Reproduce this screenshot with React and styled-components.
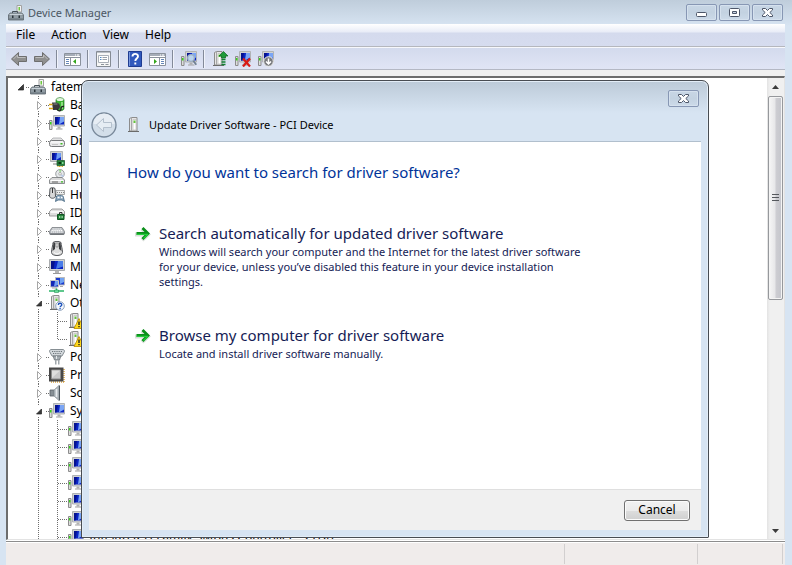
import React from "react";
import styled, { createGlobalStyle } from "styled-components";

const Global = createGlobalStyle`
  * { box-sizing: border-box; }
  html, body { margin: 0; }
  body { font: 12px/18px "Noto Sans", "Open Sans", sans-serif; color: #000; overflow: hidden; }
  button, a { font: inherit; color: inherit; }
  svg { flex: none; display: block; }
`;

const Window = styled.main`
  position: relative;
  display: flex;
  flex-direction: column;
  height: 100vh;
  padding: 0 7px 0 6px;
  background: linear-gradient(#bfcddb 0, #d7e4f2 26px);
`;
const TitleBar = styled.header`
  display: flex;
  flex: none;
  height: 24px;
  padding-right: 2px;
  color: #4c5763;
`;
const TitleText = styled.h1`
  flex: 1;
  display: flex;
  align-items: center;
  gap: 4px;
  margin: 0;
  padding: 2px 0 0 2px;
  font-size: 11px;
  font-weight: 400;
`;
const Captions = styled.div`
  display: flex;
  gap: 2px;
  margin-top: 4px;
`;
const CaptionButton = styled.button`
  display: grid;
  place-items: center;
  width: 31px;
  height: 17px;
  padding: 0;
  border: 1px solid #8797b4;
  border-radius: 2px;
  background: linear-gradient(#c8d6e5, #c3d2e1 50%, #ccdae9);
  box-shadow: inset 0 0 0 1px #d5e1ee;
`;
const MenuBar = styled.nav`
  display: flex;
  flex: none;
  height: 23px;
  padding-left: 2px;
  border-bottom: 1px solid #b5b7bd;
  background: linear-gradient(#fff 0, #e8ecf7 8px, #d4daed 9px, #d6dcef);
`;
const MenuItem = styled.button`
  padding: 0 8px;
  border: 0;
  background: none;
`;
const ToolBar = styled.div`
  display: flex;
  flex: none;
  align-items: center;
  height: 23px;
  padding: 0 0 0 1px;
  border-top: 1px solid #f7f8fc;
  border-bottom: 1px solid #b4b8c4;
  background: linear-gradient(#d3daed, #e0e5f5);
`;
const Tool = styled.button`
  display: grid;
  place-items: center;
  width: 23px;
  height: 20px;
  padding: 0;
  border: 0;
  background: none;
`;
const Divider = styled.span`
  width: 2px;
  height: 18px;
  margin: 0 3px;
  border-left: 1px solid #838a99;
  border-right: 1px solid #f0f3fb;
`;
const Body = styled.section`
  display: flex;
  flex: 1;
  flex-direction: column;
  min-height: 0;
  padding-top: 6px;
  background: #f0f0f0;
`;
const Client = styled.div`
  display: flex;
  flex: 1;
  min-height: 0;
  border: solid #6d6d6d;
  border-width: 2px 0 0 2px;
  border-right: 1px solid #e3e3e3;
  border-bottom: 1px solid #e3e3e3;
  background: #fff;
`;
const Tree = styled.ul`
  flex: 1;
  margin: 0;
  padding: 0;
  overflow: hidden;
  list-style: none;
`;
const Row = styled.li`
  display: flex;
  align-items: center;
  height: 18px;
  white-space: nowrap;
`;
const Label = styled.span`
  padding-left: 5px;
`;
const ScrollBar = styled.div`
  display: flex;
  flex: none;
  flex-direction: column;
  align-items: center;
  width: 17px;
  background: linear-gradient(90deg, #e3e3e3, #f0f0f0 3px, #f0f0f0);
`;
const ScrollArrow = styled.button`
  display: grid;
  place-items: center;
  width: 17px;
  height: 17px;
  padding: 0;
  border: 0;
  background: none;
`;
const Track = styled.div`
  flex: 1;
  width: 15px;
  padding-top: 1px;
`;
const Thumb = styled.div`
  display: grid;
  place-items: center;
  height: 48%;
  border: 1px solid #96989c;
  border-radius: 2px;
  background: linear-gradient(90deg, #f6f6f6, #e7e7e9 45%, #cdcdd2 55%, #c4c5cb);
  box-shadow: inset 0 0 0 1px #f4f4f4;
`;
const StatusBar = styled.footer`
  display: flex;
  flex: none;
  height: 24px;
  border-top: 1px solid #8d8d8d;
  padding: 2px 2px 1px 0;
  background: #f0eceb;
  box-shadow: inset 0 1px 0 #fff, 0 -1px 0 #fff;
  margin-top: 1px;
`;
const StatusPane = styled.div`
  flex: ${(p) => (p.$w ? `0 0 ${p.$w}px` : 1)};
  border-right: 1px solid #d2cfcf;
`;

const Dialog = styled.section`
  position: absolute;
  inset: 80px 83px 27px 81px;
  display: flex;
  flex-direction: column;
  padding: 0 7px 7px;
  border: 1px solid #484c52;
  border-radius: 7px 7px 1px 1px;
  background: linear-gradient(#bccad8 0, #d7e4f2 32px);
  box-shadow: inset 0 0 0 1px #e3edf7;
`;
const DialogTop = styled.div`
  display: flex;
  flex: none;
  justify-content: flex-end;
  height: 27px;
  padding: 9px 2px 0 0;
`;
const DialogTitle = styled.header`
  display: flex;
  flex: none;
  align-items: center;
  gap: 9px;
  height: 34px;
  padding-left: 1px;
  border-bottom: 1px solid #b1bfcd;
`;
const BackButton = styled.button`
  display: grid;
  place-items: center;
  width: 28px;
  height: 28px;
  padding: 0;
  border: 0;
  background: none;
`;
const DialogName = styled.h2`
  margin: 0;
  font-size: 11px;
  line-height: 18px;
  font-weight: 400;
`;
const Content = styled.div`
  flex: 1;
  padding: 19px 90px 0 38px;
  background: #fff;
`;
const Question = styled.h3`
  margin: 0 0 39px;
  font-size: 15px;
  line-height: 22px;
  font-weight: 400;
  color: #003399;
`;
const Command = styled.button`
  display: flex;
  align-items: flex-start;
  gap: 8px;
  width: 100%;
  margin-bottom: 35px;
  padding: 0 0 0 8px;
  border: 0;
  background: none;
  text-align: left;
  color: #151c55;
`;
const CommandText = styled.span`
  display: flex;
  flex-direction: column;
  max-width: 430px;
`;
const CommandTitle = styled.span`
  font-size: 15px;
  line-height: 22px;
`;
const CommandNote = styled.span`
  font-size: 11px;
  line-height: 15px;
`;
const DialogFooter = styled.footer`
  display: flex;
  flex: none;
  align-items: center;
  justify-content: flex-end;
  height: 41px;
  padding-right: 11px;
  border-top: 1px solid #dfdfdf;
  background: #f0f0f0;
`;
const PushButton = styled.button`
  width: 66px;
  height: 21px;
  padding: 0;
  border: 1px solid #707070;
  border-radius: 3px;
  background: linear-gradient(#f2f2f2, #ebebeb 50%, #dddddd 51%, #cfcfcf);
  box-shadow: inset 0 0 0 1px #fbfbfb;
  line-height: 18px;
`;

const Svg = ({ w = 16, h = 16, children }) => (
  <svg width={w} height={h} viewBox={`0 0 ${w} ${h}`} aria-hidden="true">{children}</svg>
);

const Screen = () => (
  <>
    <path d="M4.500 .5h11v10.500h-11z" fill="#d0d2d3" stroke="#b0b3b5" />
    <path d="M6 2h9v7.500H6z" fill="#0a24c4" />
    <path d="M11 2h4v4.500L10 9.500z" fill="#7aa5f5" />
    <path d="M6 2h3L7.500 9.500H6z" fill="#05128f" />
    <path d="M8.500 11.500h3v2h-3z" fill="#b0b0b0" />
    <path d="M7 14h6.500" stroke="#a0a0a0" />
  </>
);
const TinyTower = () => (
  <>
    <path d="M.5 5.500h2.500v9H.5z" fill="#dcdcdc" stroke="#8c8c8c" />
    <path d="M1 7h1.500v2.500H1z" fill="#38d21a" />
  </>
);
const Tower = () => (
  <>
    <path d="M2.500 1.500l2-1h5.500V14H2.500z" fill="#e6e6e6" stroke="#8c8c8c" />
    <path d="M4.500 1v13" stroke="#a7a7a7" />
    <path d="M6 2.500h3V13H6z" fill="#fff" stroke="#bdbdbd" strokeWidth=".7" />
    <path d="M6.500 3.500h2v2.500h-2z" fill="#65c43c" />
    <path d="M1 14.500h11" stroke="#6b6b6b" />
  </>
);
const ICONS = {
  root: (
    <>
      <path d="M9 .5h4.500V7H9z" fill="#f4f4f4" stroke="#a2a2a2" />
      <path d="M10.500 2H12v3.500h-1.500z" fill="#6fc93f" />
      <path d="M4.500 8V6.500h5V8" fill="none" stroke="#444e55" />
      <path d="M2 8h12l1.500 2v5H.5v-5z" fill="#7c8890" stroke="#5b656c" strokeWidth=".8" />
      <path d="M1.500 9.500h13" stroke="#c8d1d7" strokeWidth="1.500" />
      <path d="M1 12h14" stroke="#a6b1b8" />
      <path d="M4 10.500h1.500v2.500H4zM10.500 10.500H12v2.500h-1.500z" fill="#2c363c" />
    </>
  ),
  battery: (
    <>
      <path d="M7 3c0-3 8-3 8 0v8.500c0 3-8 3-8 0z" fill="#3cb034" stroke="#1c7420" strokeWidth=".7" />
      <ellipse cx="11" cy="2.500" rx="3.500" ry="1.500" fill="#e3f4de" />
      <path d="M13 5v7" stroke="#a6ec96" strokeWidth="1.500" />
      <path d="M3 5.500h3c3 0 5 1.500 5 4s-2 3.500-5 3.500H4z" fill="#39393b" />
      <path d="M4.500 7h4" stroke="#8b8b8f" />
      <path d="M0 7.500h3.500M0 11.500h4" stroke="#d8a511" strokeWidth="1.400" />
      <path d="M8 12c2 3 4 2 4 0s1-3 3-2.500" stroke="#222" strokeWidth="1.300" fill="none" />
    </>
  ),
  computer: <><Screen /><TinyTower /></>,
  disk: (
    <>
      <path d="M1 8l3-3h8l3 3z" fill="#e2e2e3" stroke="#a8aaac" strokeWidth=".8" />
      <rect x=".5" y="7.500" width="15" height="6" rx="2" fill="#e9e9ea" stroke="#77797b" />
      <path d="M2 9h12" stroke="#fff" />
      <path d="M11.500 10h2v1.500h-2z" fill="#3ebd24" />
      <path d="M3 11.500h6" stroke="#c5c5c5" />
    </>
  ),
  display: (
    <>
      <path d="M1.500.5h12v10h-12z" fill="#d0d2d3" stroke="#b0b3b5" />
      <path d="M3 2h9v7H3z" fill="#0a24c4" />
      <path d="M8 2h4v4L7 9z" fill="#6d9cf4" /><path d="M3 2h3L4.500 9H3z" fill="#05128f" />
      <path d="M4 13h5" stroke="#aaa" strokeWidth="1.500" />
      <path d="M8 9.500h7.500v5H8z" fill="#25823c" stroke="#115222" strokeWidth=".7" />
      <path d="M9.500 11h2.500v2H9.500z" fill="#0b3514" />
      <path d="M13 11h1.500v2H13z" fill="#86d896" />
      <path d="M8.500 15.500h6" stroke="#d5ae24" strokeDasharray="1 .5" />
    </>
  ),
  dvd: (
    <>
      <circle cx="11" cy="4.800" r="4.300" fill="#e6e9eb" stroke="#85898c" strokeWidth=".8" />
      <path d="M11 5l-1-4.200h2.600z" fill="#9cd790" /><path d="M11 5l2.500 3.500 1.500-2z" fill="#b9c9e6" />
      <circle cx="11" cy="4.800" r="1.300" fill="#fff" stroke="#888" strokeWidth=".6" />
      <path d="M.5 11L3 8.500h10l2.500 2.500v3.500H.5z" fill="#d9d9da" stroke="#74777a" strokeWidth=".8" />
      <path d="M1.500 11.500h13" stroke="#fff" /><path d="M3 13h6" stroke="#666" />
      <path d="M12 12.300h2v1.300h-2z" fill="#3ebd24" />
    </>
  ),
  human: (
    <>
      <path d="M1 1.500C2 .5 5 .5 6 1.500L6.500 9c0 3-6 3-6 0z" fill="#d8d8d8" stroke="#505458" />
      <path d="M3.500 1v5" stroke="#333" />
      <path d="M7 3.500h8.500v4H7z" fill="#eceeee" stroke="#888" strokeWidth=".7" />
      <path d="M8 5.500h7" stroke="#888" strokeDasharray="1 1" />
      <path d="M6.500 14.500L7.500 9c2-.8 4.500-.8 6.500 0l1.500 5.500-2.500-1.500H9z" fill="#8fa9bf" stroke="#3e617c" strokeWidth=".8" />
      <path d="M8.500 10.500h2M12 10.500h1.500" stroke="#fff" strokeWidth="1.300" />
    </>
  ),
  ide: (
    <>
      <path d="M3 4h10l2.500 2.500v4.500H.5V6.500z" fill="#dedede" stroke="#888" strokeWidth=".8" />
      <path d="M1.500 7h13" stroke="#fff" strokeWidth="1.500" />
      <path d="M8.500 9.500H15v5H8.500z" fill="#25823c" stroke="#0f5520" />
      <path d="M10.500 9V7.500H13V9" fill="none" stroke="#333" /><path d="M10 12h1.300M12.500 12h1.300" stroke="#c5efc5" strokeWidth="1.300" />
    </>
  ),
  keyboard: (
    <>
      <path d="M3 4.500h10l2.500 4v2c0 1-1 1-1 1h-13s-1 0-1-1v-2z" fill="#b4b8bd" stroke="#7b7f84" strokeWidth=".8" />
      <path d="M3.500 6h9M2.500 7.500h11M2 9h12" stroke="#fff" strokeDasharray="1.300 .6" />
      <path d="M1 11h14" stroke="#55585c" />
    </>
  ),
  mouse: (
    <>
      <path d="M4 1.500c1-1.500 7-1.500 8 0 0 3 1.500 6 1.500 10 0 4-11 4-11 0 0-4 1.500-7 1.500-10z" fill="#dcdcdc" stroke="#54565a" />
      <path d="M4.500 1.500h1.800L6 8 3.500 10zM11.500 1.500H9.700L10 8l2.500 2z" fill="#3b3d40" />
      <path d="M7 2h2v4H7z" fill="#eee" stroke="#555" strokeWidth=".5" />
      <path d="M5 11.500c2 2 4 2 6 0" stroke="#fff" fill="none" />
    </>
  ),
  monitor: (
    <>
      <path d="M.5.5h15v11H.5z" fill="#d0d2d3" stroke="#a9acae" />
      <path d="M2 2h12v8H2z" fill="#0a24c4" />
      <path d="M9 2h5v5.500L7 10z" fill="#4a7de8" /><path d="M2 2h4L4.500 10H2z" fill="#06128a" />
      <path d="M6 12h4v2H6z" fill="#b5b5b5" /><path d="M4 14.500h8" stroke="#999" />
    </>
  ),
  network: (
    <>
      <path d="M6.500.5h9V8h-9z" fill="#1a3bd0" stroke="#bbb" />
      <path d="M11 1h4v4l-4 2z" fill="#71a3f3" />
      <path d="M1.500 3.500h8V10h-8z" fill="#1227b5" stroke="#c5c7c9" />
      <path d="M6 4h3v4L5 9.500z" fill="#6f9ff2" />
      <path d="M3 11h5M11 9.500h3" stroke="#aaa" />
      <path d="M0 14h15M7.500 11.500V14" stroke="#2bb567" strokeWidth="1.600" />
      <path d="M5.500 13h4v2.500h-4z" fill="#6be09a" stroke="#168245" strokeWidth=".5" />
    </>
  ),
  other: (
    <>
      <Tower />
      <circle cx="11" cy="11" r="4.300" fill="#f5f8fc" stroke="#8398b5" strokeWidth=".9" />
      <path d="M9.300 10c0-2.400 3.500-2.200 3.500-.3 0 1.300-1.700 1.200-1.700 2.500M11.100 13v1.200" stroke="#1b52bd" strokeWidth="1.300" fill="none" />
    </>
  ),
  warn: (
    <>
      <Tower />
      <path d="M11 5.500L16 15.500H6z" fill="#ffd91a" stroke="#b88b00" strokeWidth=".8" />
      <path d="M11 8.500v3.500M11 13v1.300" stroke="#222" strokeWidth="1.400" />
    </>
  ),
  port: (
    <>
      <path d="M.5 2.500C.5.500 2 .5 2 .5h12s1.500 0 1.500 2L13 7H3z" fill="#d3d8dc" stroke="#7b8389" strokeWidth=".9" />
      <path d="M3 2.500h10M4 4.500h8" stroke="#6b7379" strokeDasharray="1.200 1" />
      <path d="M4 7h8l-1.500 4h-5z" fill="#a5adb2" stroke="#656c71" strokeWidth=".7" />
      <path d="M6 11h1.500v4.500H6zM9 11h1.500v4.500H9z" fill="#a0a7ac" />
      <path d="M7.500 7v3" stroke="#e6eaed" />
    </>
  ),
  cpu: (
    <>
      <path d="M2 15h14M15 2v13" stroke="#dba43f" strokeWidth="1.500" strokeDasharray="1 1" />
      <path d="M0 .5h14.500V14.500H0z" fill="#484848" />
      <path d="M2.500 3h9v9h-9z" fill="#c8c8c9" stroke="#8d8d8d" />
      <path d="M3 3.500h8L3 11z" fill="#dedede" />
    </>
  ),
  sound: (
    <>
      <path d="M1 5h4v6H1z" fill="#878f95" stroke="#596168" strokeWidth=".8" />
      <path d="M5 5l5-4.500v15L5 11z" fill="#b5bcc1" stroke="#8b949a" strokeWidth=".8" />
      <path d="M7.500 4v8" stroke="#e7ebee" strokeWidth="1.500" />
      <path d="M10.500.5v15" stroke="#4e575e" />
    </>
  ),
};
const Icon = ({ name }) => <Svg>{ICONS[name]}</Svg>;

/* Dotted connectors and the expander of one tree row. */
const Guides = ({ depth, open, last }) => {
  const dots = { stroke: "#6f6f6f", strokeWidth: 1, strokeDasharray: "1 1" };
  if (depth === 0)
    return (
      <Svg w={22} h={18}>
        <path d="M15.500 6.500V12H10z" fill="#3a3a3a" stroke="#222" strokeWidth=".7" />
        <path d="M18 9.500h4" {...dots} />
      </Svg>
    );
  if (depth === 1)
    return (
      <Svg w={41} h={18}>
        <path d="M30.500 0v4M30.500 15v3M38 9.500h3" {...dots} />
        {open ? (
          <path d="M33.500 7V12H28.500z" fill="#3a3a3a" stroke="#222" strokeWidth=".7" />
        ) : (
          <path d="M29.500 5.500v8l4-4z" fill="#fff" stroke="#a6a6a6" />
        )}
      </Svg>
    );
  return (
    <Svg w={60} h={18}>
      <path d={`M30.500 0v18M49.500 0v${last ? 9 : 18}M50 9.500h10`} {...dots} />
    </Svg>
  );
};

const ROWS = [
  [0, "root", "fatemeh"],
  [1, "battery", "Batteries"],
  [1, "computer", "Computer"],
  [1, "disk", "Disk drives"],
  [1, "display", "Display adapters"],
  [1, "dvd", "DVD"],
  [1, "human", "Human Interface Devices"],
  [1, "ide", "IDE ATA/ATAPI controllers"],
  [1, "keyboard", "Keyboards"],
  [1, "mouse", "Mice"],
  [1, "monitor", "Monitors"],
  [1, "network", "Network adapters"],
  [1, "other", "Other devices", "open"],
  [2, "warn", ""],
  [2, "warn", "", "last"],
  [1, "port", "Ports (COM & LPT)"],
  [1, "cpu", "Processors"],
  [1, "sound", "Sound"],
  [1, "computer", "System devices", "open"],
  [2, "computer", ""],
  [2, "computer", ""],
  [2, "computer", ""],
  [2, "computer", ""],
  [2, "computer", ""],
  [2, "computer", ""],
  [2, "computer", "Intel(R) ICH Family SMBus Controller - 27DA"],
];

const Arrow = ({ flip }) => (
  <Svg w={18} h={16}>
    <g transform={flip ? "matrix(-1 0 0 1 18 0)" : undefined}>
      <path d="M1.500 8L8.500 1.500v4h8v5h-8v4z" fill="#8f8f8f" stroke="#6e6e6e" />
      <path d="M3.500 8L7.500 4v2.500h8" fill="none" stroke="#bdbdbd" />
    </g>
  </Svg>
);
const Panel = ({ right }) => (
  <Svg w={17} h={16}>
    <path d="M.5 2.500h16v12H.5z" fill="#fff" stroke="#8b929d" />
    <path d="M1 3h15v2H1z" fill="#a6adb8" /><path d="M1 6.500h15" stroke="#8b929d" />
    <path d="M11 4h1M13 4h2" stroke="#fff" />
    <g transform={right ? "matrix(-1 0 0 1 17 0)" : undefined}>
      <path d="M6.500 7v7" stroke="#8b929d" />
      <path d="M2 8.500h3M2 10.500h3M2 12.500h3" stroke="#6687b8" />
      <path d="M12 8v5l-3-2.500z" fill="#32a51c" />
    </g>
  </Svg>
);
const TOOLS = [
  ["Back", <Arrow />],
  ["Forward", <Arrow flip />],
  null,
  ["Show/Hide Console Tree", <Panel />],
  null,
  ["Properties", (
    <Svg>
      <path d="M.5.5h14v15H.5z" fill="#f6f6f6" stroke="#858b94" />
      <path d="M1 1.500h13" stroke="#b9bec6" />
      <path d="M2.500 4.500h10v7h-10z" fill="#fff" stroke="#a9afb8" />
      <path d="M4 6.500h1.500M4 8.500h1.500" stroke="#4e86c0" />
      <path d="M6.500 6.500H11M6.500 8.500H11" stroke="#9aa1aa" />
      <path d="M5 13.500h3M9.500 13.500h3" stroke="#8d939b" />
    </Svg>
  )],
  null,
  ["Help", (
    <Svg w={14}>
      <path d="M.5.5h13v15H.5z" fill="#3159bd" stroke="#203c91" />
      <path d="M1.500 1v14" stroke="#7696df" />
      <path d="M4.500 5.500c0-3.500 5.500-3.300 5.500-.3C10 7.500 7.300 7.400 7.300 10M7.300 11.500v2" fill="none" stroke="#fff" strokeWidth="1.900" />
    </Svg>
  )],
  ["Show/Hide Action Pane", <Panel right />],
  null,
  ["Scan for hardware changes", (
    <Svg>
      <Screen /><TinyTower />
      <circle cx="10" cy="7" r="3.300" fill="#b9d4ef" stroke="#9fb0c2" strokeWidth="1.300" />
      <path d="M12.300 9.800l3 4" stroke="#6f7f91" strokeWidth="1.800" />
    </Svg>
  )],
  null,
  ["Update Driver Software", (
    <Svg>
      <Tower />
      <path d="M11.500.5L16 5h-2.500v2h-4V5H7z" fill="#1e9b3a" stroke="#0c6420" strokeWidth=".7" />
      <path d="M9.500 8.500h4M9.500 11h4M9.500 13.500h4" stroke="#128031" strokeWidth="1.400" />
    </Svg>
  )],
  ["Uninstall", (
    <Svg>
      <Screen /><TinyTower />
      <path d="M8 7.500l7 8M15 7.500l-7 8" stroke="#d91b16" strokeWidth="2.200" />
    </Svg>
  )],
  ["Disable", (
    <Svg>
      <Screen /><TinyTower />
      <circle cx="10.500" cy="10.500" r="4.800" fill="#77797c" stroke="#eee" />
      <path d="M10.500 7.500v5M8 10.500l2.500 2.500 2.500-2.500" stroke="#fff" strokeWidth="1.500" fill="none" />
    </Svg>
  )],
];

const CloseGlyph = () => (
  <Svg w={13} h={9}>
    <path d="M1.500.5h3l2 2 2-2h3v1.500L8.800 4.500l2.700 2.500v1.500h-3l-2-2-2 2h-3V7l2.700-2.500L1.500 2z" fill="#fff" stroke="#4d5669" />
  </Svg>
);
const GreenArrow = () => (
  <Svg w={16} h={22}>
    <path d="M0 12.500h10M7 7l6 5.500L7 18" fill="none" stroke="#d9dfd9" strokeWidth="4" />
    <path d="M1.500 11.500h11M7.500 6l5.500 5.500L7.500 17" fill="none" stroke="#0a8f1a" strokeWidth="2.800" />
    <path d="M2 12.300h11M8.500 16.500l4.500-4.200" fill="none" stroke="#25cf3c" strokeWidth="1.300" />
  </Svg>
);

export default function App() {
  return (
    <>
      <Global />
      <Window>
        <TitleBar>
          <TitleText><Icon name="root" />Device Manager</TitleText>
          <Captions>
            <CaptionButton aria-label="Minimize">
              <Svg w={13} h={9}><rect x="1.500" y="4.500" width="10" height="4" rx="1" fill="#fff" stroke="#4d5669" /></Svg>
            </CaptionButton>
            <CaptionButton aria-label="Maximize">
              <Svg w={13} h={9}>
                <rect x="1.500" y=".5" width="10" height="8" rx="1" fill="#fff" stroke="#4d5669" />
                <path d="M4.500 3.500h4v2h-4z" fill="#c8d5e4" stroke="#4d5669" />
              </Svg>
            </CaptionButton>
            <CaptionButton aria-label="Close"><CloseGlyph /></CaptionButton>
          </Captions>
        </TitleBar>
        <MenuBar>
          {["File", "Action", "View", "Help"].map((m) => <MenuItem key={m}>{m}</MenuItem>)}
        </MenuBar>
        <ToolBar>
          {TOOLS.map((t, i) => (t ? <Tool key={i} aria-label={t[0]}>{t[1]}</Tool> : <Divider key={i} />))}
        </ToolBar>
        <Body>
          <Client>
            <Tree>
              {ROWS.map(([depth, icon, text, state], i) => (
                <Row key={i}>
                  <Guides depth={depth} open={state === "open"} last={state === "last"} />
                  <Icon name={icon} />
                  {text && <Label>{text}</Label>}
                </Row>
              ))}
            </Tree>
            <ScrollBar>
              <ScrollArrow aria-label="Scroll up"><Svg w={7} h={4}><path d="M0 4l3.500-4L7 4z" fill="#3b3b3b" /></Svg></ScrollArrow>
              <Track>
                <Thumb>
                  <Svg w={7} h={8}><path d="M0 .5h7M0 3.500h7M0 6.500h7" stroke="#55585d" /></Svg>
                </Thumb>
              </Track>
              <ScrollArrow aria-label="Scroll down"><Svg w={7} h={4}><path d="M0 0h7L3.500 4z" fill="#3b3b3b" /></Svg></ScrollArrow>
            </ScrollBar>
          </Client>
          <StatusBar><StatusPane /><StatusPane $w={133} /><StatusPane $w={85} /></StatusBar>
        </Body>

        <Dialog role="dialog" aria-label="Update Driver Software">
          <DialogTop><CaptionButton aria-label="Close dialog"><CloseGlyph /></CaptionButton></DialogTop>
          <DialogTitle>
            <BackButton aria-label="Go back">
              <Svg w={28} h={28}>
                <circle cx="14" cy="14" r="12" fill="#d3dee9" stroke="#78889a" strokeWidth="1.300" />
                <path d="M3.500 13a10.500 10.500 0 0 1 21 0z" fill="#e7edf4" />
                <path d="M6.500 14l7-6.500v4h8v5h-8v4z" fill="#e6edf4" stroke="#b4c0cd" />
              </Svg>
            </BackButton>
            <Svg w={13}><Tower /></Svg>
            <DialogName>Update Driver Software - PCI Device</DialogName>
          </DialogTitle>
          <Content>
            <Question>How do you want to search for driver software?</Question>
            <Command>
              <GreenArrow />
              <CommandText>
                <CommandTitle>Search automatically for updated driver software</CommandTitle>
                <CommandNote>
                  Windows will search your computer and the Internet for the latest driver software for your device, unless you’ve disabled this feature in your device installation settings.
                </CommandNote>
              </CommandText>
            </Command>
            <Command>
              <GreenArrow />
              <CommandText>
                <CommandTitle>Browse my computer for driver software</CommandTitle>
                <CommandNote>Locate and install driver software manually.</CommandNote>
              </CommandText>
            </Command>
          </Content>
          <DialogFooter><PushButton>Cancel</PushButton></DialogFooter>
        </Dialog>
      </Window>
    </>
  );
}
